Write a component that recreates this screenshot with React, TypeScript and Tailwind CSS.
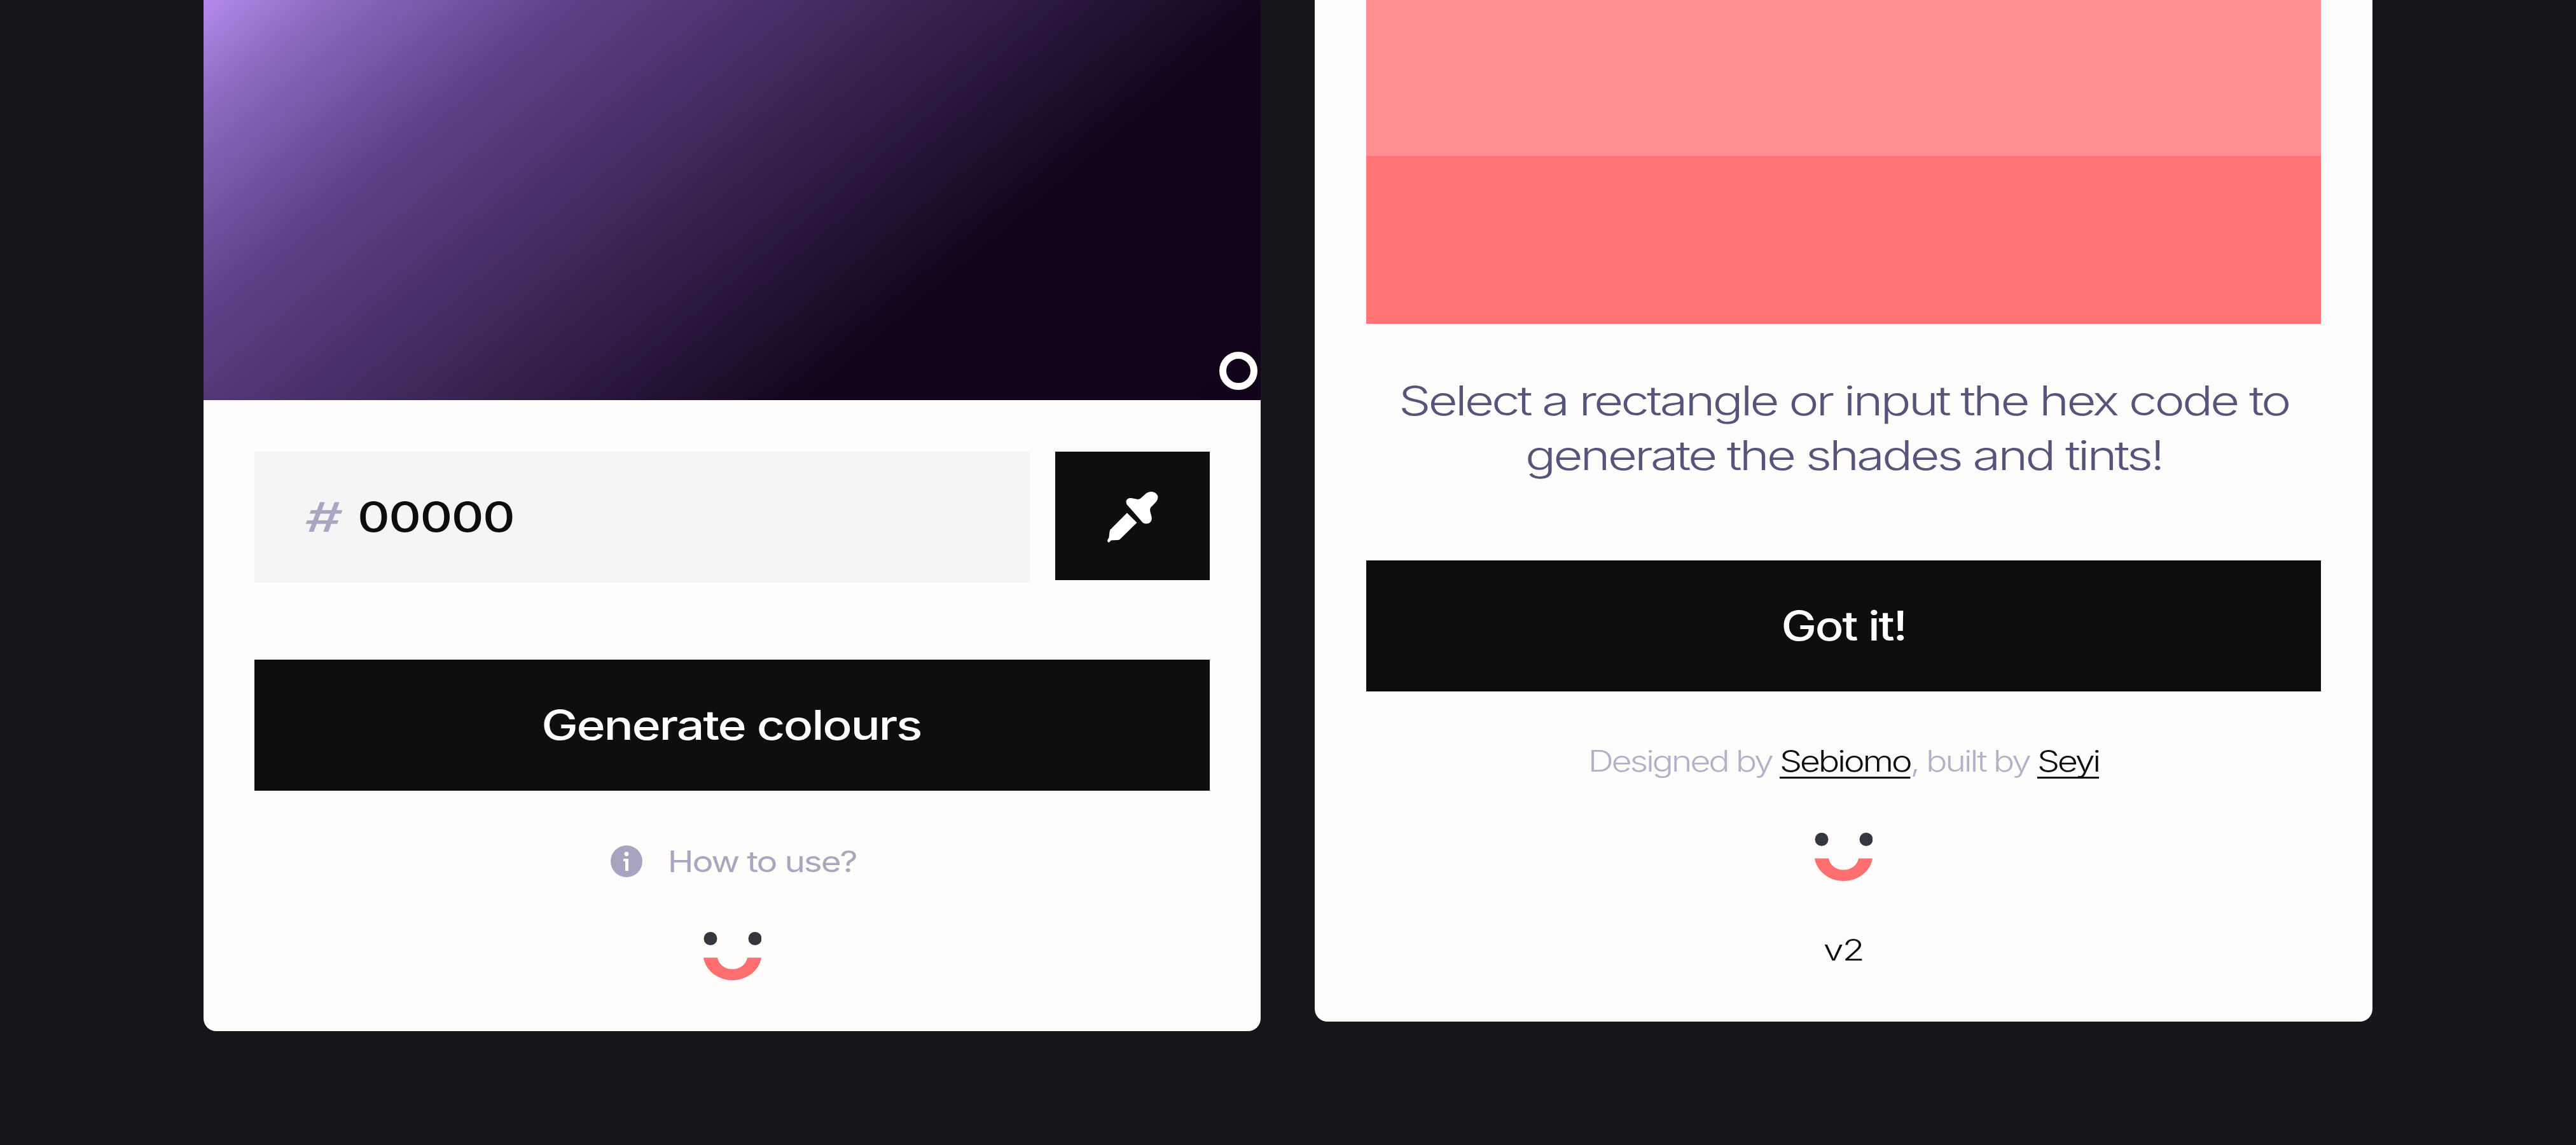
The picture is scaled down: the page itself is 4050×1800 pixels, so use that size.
function Smile() {
  return (
    <svg width="91" height="76" viewBox="0 0 91 76" className="block">
      <circle cx="11" cy="10.5" r="10.5" fill="#343640" />
      <circle cx="81" cy="10.5" r="10.5" fill="#343640" />
      <path d="M0 40.5H22C24 51 33 58.5 45.5 58.5C58 58.5 67 51 69 40.5H91C88 60 69 76 45.5 76C22 76 3 60 0 40.5Z" fill="#FF6F70" />
    </svg>
  );
}

function Dropper() {
  return (
    <svg width="88" height="85" viewBox="410 320 265 255" className="block" fill="#ffffff">
      <path d="M515 393C505 375 515 360 535 362C555 364 570 375 585 358L605 340C625 325 650 330 660 350C665 365 655 378 645 388L628 405C618 420 630 435 632 455C634 478 612 490 590 478Z" />
      <path d="M515 432L562 478L480 558C470 562 450 560 440 562L430 572C420 570 420 560 428 552C432 545 430 525 435 512Z" />
    </svg>
  );
}

function InfoDot() {
  return (
    <svg width="50" height="50" viewBox="0 0 50 50" className="block">
      <circle cx="25" cy="25" r="25" fill="#A6A4BE" />
      <circle cx="25" cy="13.5" r="3.4" fill="#FFFDFB" />
      <path d="M20 21H28V40H23V25H20Z" fill="#FFFDFB" />
    </svg>
  );
}

export default function App() {
  return (
    <div className="flex h-[1800px] w-[4050px] items-start gap-[85px] overflow-hidden bg-[#15151A] pl-[320px] font-['Inter',sans-serif]">
      {/* colour picker card */}
      <section className="relative w-[1662px] rounded-b-[20px] bg-[#FFFDFB] pb-[80px]">
        <div className="relative h-[629px] bg-[linear-gradient(139.7deg,#B48AEC_0%,#8a68bd_9%,#5e4088_24%,#3c2757_45%,#12051c_70%,#11041a_100%)]">
          <div className="absolute right-[5px] bottom-[16px] h-[60px] w-[60px] rounded-full border-[11px] border-white" />
        </div>

        <div className="px-[80px] pt-[81px]">
          <div className="flex items-start gap-[40px]">
            <div className="flex h-[206px] w-[1219px] items-center gap-[40px] bg-[#F5F5F6] pl-[81px] text-[64px] font-medium">
              <span className="inline-block origin-left -skew-x-6 scale-x-[1.4] text-[#A8A6C0]">#</span>
              <span className="inline-block origin-left scale-x-[1.23] tracking-[-0.02em] text-[#0D0D0D]">00000</span>
            </div>
            <button className="flex h-[202px] w-[243px] items-center justify-center bg-[#0E0E0E]">
              <Dropper />
            </button>
          </div>

          <button className="mt-[121px] flex h-[206px] w-full items-center justify-center bg-[#0E0E0E] pr-[2px] text-[64px] font-medium text-white">
            <span className="inline-block scale-x-[1.205] tracking-[-0.03em]">Generate colours</span>
          </button>

          <div className="mt-[86px] flex h-[50px] items-center justify-center gap-[64px] pr-[19px]">
            <InfoDot />
            <span className="inline-block scale-x-[1.195] text-[46px] tracking-[-0.04em] text-[#A8A6C0]">How to use?</span>
          </div>

          <div className="mt-[86px] flex justify-center">
            <Smile />
          </div>
        </div>
      </section>

      {/* how to use card */}
      <section className="w-[1663px] rounded-b-[20px] bg-[#FFFDFB] px-[81px] pb-[84px]">
        <div className="h-[245px] bg-[#FF8F8F]" />
        <div className="h-[264px] bg-[#FF7575]" />

        <p className="mt-[78px] text-center text-[64px] leading-[86px] font-light tracking-[-0.05em] text-[#55547A]">
          <span className="inline-block scale-x-[1.25]">
            Select a rectangle or input the hex code to
            <br />
            generate the shades and tints!
          </span>
        </p>

        <button className="mt-[122px] flex h-[206px] w-full items-center justify-center bg-[#0E0E0E] text-[64px] font-medium text-white">
          <span className="inline-block scale-x-[1.16] tracking-[-0.03em]">Got it!</span>
        </button>

        <p className="mt-[80px] text-center text-[46px] leading-[58px] font-light tracking-[-0.06em] text-[#B3B1C9]">
          <span className="inline-block scale-x-[1.212]">
            Designed by{" "}
            <a className="text-[#0D0D0D] underline decoration-[3px] underline-offset-[8px] [text-decoration-skip-ink:none]">Sebiomo</a>
            , built by{" "}
            <a className="text-[#0D0D0D] underline decoration-[3px] underline-offset-[8px] [text-decoration-skip-ink:none]">Seyi</a>
          </span>
        </p>

        <div className="mt-[84px] flex justify-center">
          <Smile />
        </div>

        <p className="mt-[79px] text-center text-[46px] leading-[58px] font-light tracking-[-0.04em] text-[#0D0D0D]">
          <span className="inline-block scale-x-[1.25]">v2</span>
        </p>
      </section>
    </div>
  );
}
